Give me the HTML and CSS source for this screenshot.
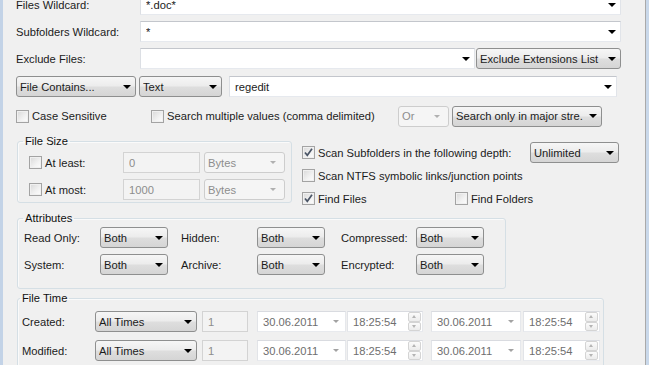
FILE: index.html
```html
<!DOCTYPE html>
<html lang="en">

<head>
    <meta charset="utf-8">
    <title>Search Options</title>
    <link rel="stylesheet" href="styles.css">
</head>

<body>
    <div class="window">
        <div class="form">
            <div class="row">
                <label class="lbl">Files Wildcard:</label>
                <div class="field w481"><span>*.doc*</span><i class="arr"></i></div>
            </div>
            <div class="row">
                <label class="lbl">Subfolders Wildcard:</label>
                <div class="field w481"><span>*</span><i class="arr"></i></div>
            </div>
            <div class="row">
                <label class="lbl">Exclude Files:</label>
                <div class="field w335"><span></span><i class="arr"></i></div>
                <div class="combo w145 ml1"><span>Exclude Extensions List</span><i class="arr"></i></div>
            </div>
            <div class="row r4">
                <div class="combo w120"><span>File Contains...</span><i class="arr"></i></div>
                <div class="combo w83 ml3"><span>Text</span><i class="arr"></i></div>
                <div class="field w388 ml7"><span>regedit</span><i class="arr"></i></div>
            </div>
            <div class="row r5">
                <label class="cb w135"><span class="chk"></span>Case Sensitive</label>
                <label class="cb w247"><span class="chk"></span>Search multiple values (comma delimited)</label>
                <div class="combo off w51"><span>Or</span><i class="arr"></i></div>
                <div class="combo w150 ml3"><span>Search only in major stre.</span><i class="arr"></i></div>
            </div>

            <div class="mid">
                <fieldset class="grp size">
                    <legend>File Size</legend>
                    <div class="srow">
                        <label class="cb w94"><span class="chk"></span>At least:</label>
                        <div class="field off w77"><span>0</span></div>
                        <div class="combo off w81 ml4"><span>Bytes</span><i class="arr"></i></div>
                    </div>
                    <div class="srow">
                        <label class="cb w94"><span class="chk"></span>At most:</label>
                        <div class="field off w77"><span>1000</span></div>
                        <div class="combo off w81 ml4"><span>Bytes</span><i class="arr"></i></div>
                    </div>
                </fieldset>
                <div class="opts">
                    <div class="orow">
                        <label class="cb w228"><span class="chk on"><svg viewBox="0 0 11 11"><path d="M2 5.5 4.3 8.3 9 1.8"/></svg></span>Scan Subfolders in the following depth:</label>
                        <div class="combo w89"><span>Unlimited</span><i class="arr"></i></div>
                    </div>
                    <div class="orow">
                        <label class="cb"><span class="chk"></span>Scan NTFS symbolic links/junction points</label>
                    </div>
                    <div class="orow">
                        <label class="cb w153"><span class="chk on"><svg viewBox="0 0 11 11"><path d="M2 5.5 4.3 8.3 9 1.8"/></svg></span>Find Files</label>
                        <label class="cb"><span class="chk"></span>Find Folders</label>
                    </div>
                </div>
            </div>

            <fieldset class="grp attrs">
                <legend>Attributes</legend>
                <div class="arow">
                    <label class="al">Read Only:</label>
                    <div class="combo w68"><span>Both</span><i class="arr"></i></div>
                    <label class="al ml13">Hidden:</label>
                    <div class="combo w68"><span>Both</span><i class="arr"></i></div>
                    <label class="al al2">Compressed:</label>
                    <div class="combo w68"><span>Both</span><i class="arr"></i></div>
                </div>
                <div class="arow">
                    <label class="al">System:</label>
                    <div class="combo w68"><span>Both</span><i class="arr"></i></div>
                    <label class="al ml13">Archive:</label>
                    <div class="combo w68"><span>Both</span><i class="arr"></i></div>
                    <label class="al al2">Encrypted:</label>
                    <div class="combo w68"><span>Both</span><i class="arr"></i></div>
                </div>
            </fieldset>

            <fieldset class="grp times">
                <legend>File Time</legend>
                <div class="trow">
                    <label class="tl">Created:</label>
                    <div class="combo w102"><span>All Times</span><i class="arr"></i></div>
                    <div class="field off num"><span>1</span></div>
                    <div class="field date d1"><span>30.06.2011</span><i class="arr"></i></div>
                    <div class="field date t1"><span>18:25:54</span><i class="spin"><b></b><b></b></i></div>
                    <div class="field date d2"><span>30.06.2011</span><i class="arr"></i></div>
                    <div class="field date t2"><span>18:25:54</span><i class="spin"><b></b><b></b></i></div>
                </div>
                <div class="trow">
                    <label class="tl">Modified:</label>
                    <div class="combo w102"><span>All Times</span><i class="arr"></i></div>
                    <div class="field off num"><span>1</span></div>
                    <div class="field date d1"><span>30.06.2011</span><i class="arr"></i></div>
                    <div class="field date t1"><span>18:25:54</span><i class="spin"><b></b><b></b></i></div>
                    <div class="field date d2"><span>30.06.2011</span><i class="arr"></i></div>
                    <div class="field date t2"><span>18:25:54</span><i class="spin"><b></b><b></b></i></div>
                </div>
            </fieldset>
        </div>
    </div>
</body>

</html>
```

FILE: styles.css
```css
* {
    box-sizing: border-box;
}

html {
    background: #c9d8ea;
}

body {
    margin: 0;
    font-family: "Liberation Sans", Arial, sans-serif;
    font-size: 11.2px;
    color: #1b1b1b;
    overflow: hidden;
}

.window {
    display: flow-root;
    width: 646px;
    height: 365px;
    background: #f0f0f0;
    border-left: 3px solid #c3d3e7;
    border-right: 1px solid #a9a9a9;
}

.form {
    margin-top: -6px;
    padding-left: 13px;
}

/* top rows */

.row {
    display: flex;
    align-items: center;
    height: 21px;
    margin-top: 6px;
}

.row:first-child {
    margin-top: 0;
}

.r4 {
    margin-top: 7px;
}

.r5 {
    margin-top: 8px;
    height: 22px;
}

.lbl {
    width: 124px;
    flex: none;
}

/* controls */

.field,
.combo {
    display: flex;
    align-items: center;
    height: 21px;
    flex: none;
    white-space: nowrap;
    overflow: hidden;
}

.field span,
.combo span {
    flex: 1;
    overflow: hidden;
}

.field {
    background: #fff;
    border: 1px solid;
    border-color: #c3c6cc #e1e4e9 #e6e9ee #dcdfe4;
    padding-left: 5px;
}

.combo {
    border: 1px solid #8e8f8f;
    border-radius: 3px;
    background: linear-gradient(#f6f6f6, #ececec 48%, #dedede 52%, #d5d5d5);
    padding-left: 3px;
}

.combo.off {
    border-color: #cdcdcd;
    background: #f5f5f5;
    color: #8d8d8d;
}

.field.off {
    background: #f3f3f3;
    border-color: #d3d3d3;
    color: #8d8d8d;
}

.arr {
    flex: none;
    width: 0;
    height: 0;
    border-left: 4px solid transparent;
    border-right: 4px solid transparent;
    border-top: 4px solid #000;
    margin-right: 4px;
}

.off .arr {
    border-left-width: 3px;
    border-right-width: 3px;
    border-top: 3px solid #b0b0b0;
    margin-right: 8px;
}

/* checkboxes */

.cb {
    display: flex;
    align-items: center;
    flex: none;
    white-space: nowrap;
}

.chk {
    width: 13px;
    height: 13px;
    flex: none;
    margin-right: 3px;
    border: 1px solid #a3a3a3;
    background: linear-gradient(135deg, #d8d8d8, #f2f2f2 60%, #fdfdfd);
    box-shadow: inset 0 0 0 1px #f0f0f0;
}

.chk svg {
    display: block;
    width: 11px;
    height: 11px;
}

.chk path {
    fill: none;
    stroke: #4a5566;
    stroke-width: 1.7;
}

/* widths */

.w481 { width: 481px; }
.w335 { width: 335px; }
.w145 { width: 145px; }
.w120 { width: 120px; }
.w83 { width: 83px; }
.w388 { width: 388px; }
.w135 { width: 135px; }
.w247 { width: 247px; }
.w51 { width: 51px; }
.w150 { width: 150px; }
.w94 { width: 94px; }
.w77 { width: 77px; }
.w81 { width: 81px; }
.w228 { width: 228px; }
.w89 { width: 89px; }
.w153 { width: 153px; }
.w68 { width: 68px; }
.w102 { width: 102px; }

.ml1 { margin-left: 1px; }
.ml3 { margin-left: 3px; }
.ml4 { margin-left: 4px; }
.ml7 { margin-left: 7px; }
.ml13 { margin-left: 13px; }

/* group boxes */

.grp {
    margin: 0 0 0 1px;
    border: 1px solid #d5dfe5;
    border-radius: 3px;
    box-shadow: inset 1px 1px 0 #fafafa;
}

.grp legend {
    padding: 0 2px;
    line-height: 14px;
    color: #111;
}

.mid {
    display: flex;
    align-items: flex-start;
    height: 69px;
    margin-top: 7px;
}

.size {
    width: 275px;
    padding: 4px 5px 2px 5px;
}

.srow {
    display: flex;
    align-items: center;
    height: 21px;
    margin-top: 6px;
    padding-left: 6px;
}

.srow:first-of-type {
    margin-top: 0;
}

.opts {
    margin-left: 10px;
    padding-top: 8px;
}

.orow {
    display: flex;
    align-items: center;
    height: 21px;
    margin-bottom: 2px;
}

.attrs {
    width: 489px;
    margin-top: 8px;
    padding: 2px 5px 13px 5px;
}

.arow {
    display: flex;
    align-items: center;
    height: 21px;
    margin-bottom: 6px;
}

.arow:last-child {
    margin-bottom: 0;
}

.al {
    width: 76px;
    flex: none;
    margin-left: 1px;
}

.al.ml13 {
    margin-left: 13px;
}

.al2 {
    width: 75px;
    margin-left: 16px;
}

.times {
    width: 587px;
    margin-top: 2px;
    padding: 6px 2px 0 2px;
}

.trow {
    display: flex;
    align-items: center;
    height: 21px;
    margin-bottom: 8px;
}

.tl {
    width: 73px;
    flex: none;
    margin-left: 2px;
}

.num {
    width: 46px;
    margin-left: 5px;
}

.date {
    color: #6e6e6e;
    border-color: #d9dbe0 #e6e8ec #e8eaee #e2e4e8;
}

.date .arr {
    border-left-width: 3px;
    border-right-width: 3px;
    border-top: 3px solid #a2a2a2;
    margin-right: 6px;
}

.d1 { width: 89px; margin-left: 9px; }
.t1 { width: 76px; margin-left: 1px; }
.d2 { width: 90px; margin-left: 8px; }
.t2 { width: 77px; margin-left: 2px; }

.spin {
    flex: none;
    display: flex;
    flex-direction: column;
    width: 13px;
    height: 19px;
    margin-right: 1px;
}

.spin b {
    flex: 1;
    border: 1px solid #d4d4d4;
    border-radius: 2px;
    background: linear-gradient(#fbfbfb, #ececec);
    position: relative;
}

.spin b::after {
    content: "";
    position: absolute;
    left: 3px;
    top: 2px;
    border-left: 2.5px solid transparent;
    border-right: 2.5px solid transparent;
    border-bottom: 3px solid #b4b4b4;
}

.spin b + b::after {
    border-bottom: none;
    border-top: 3px solid #b4b4b4;
}
```
